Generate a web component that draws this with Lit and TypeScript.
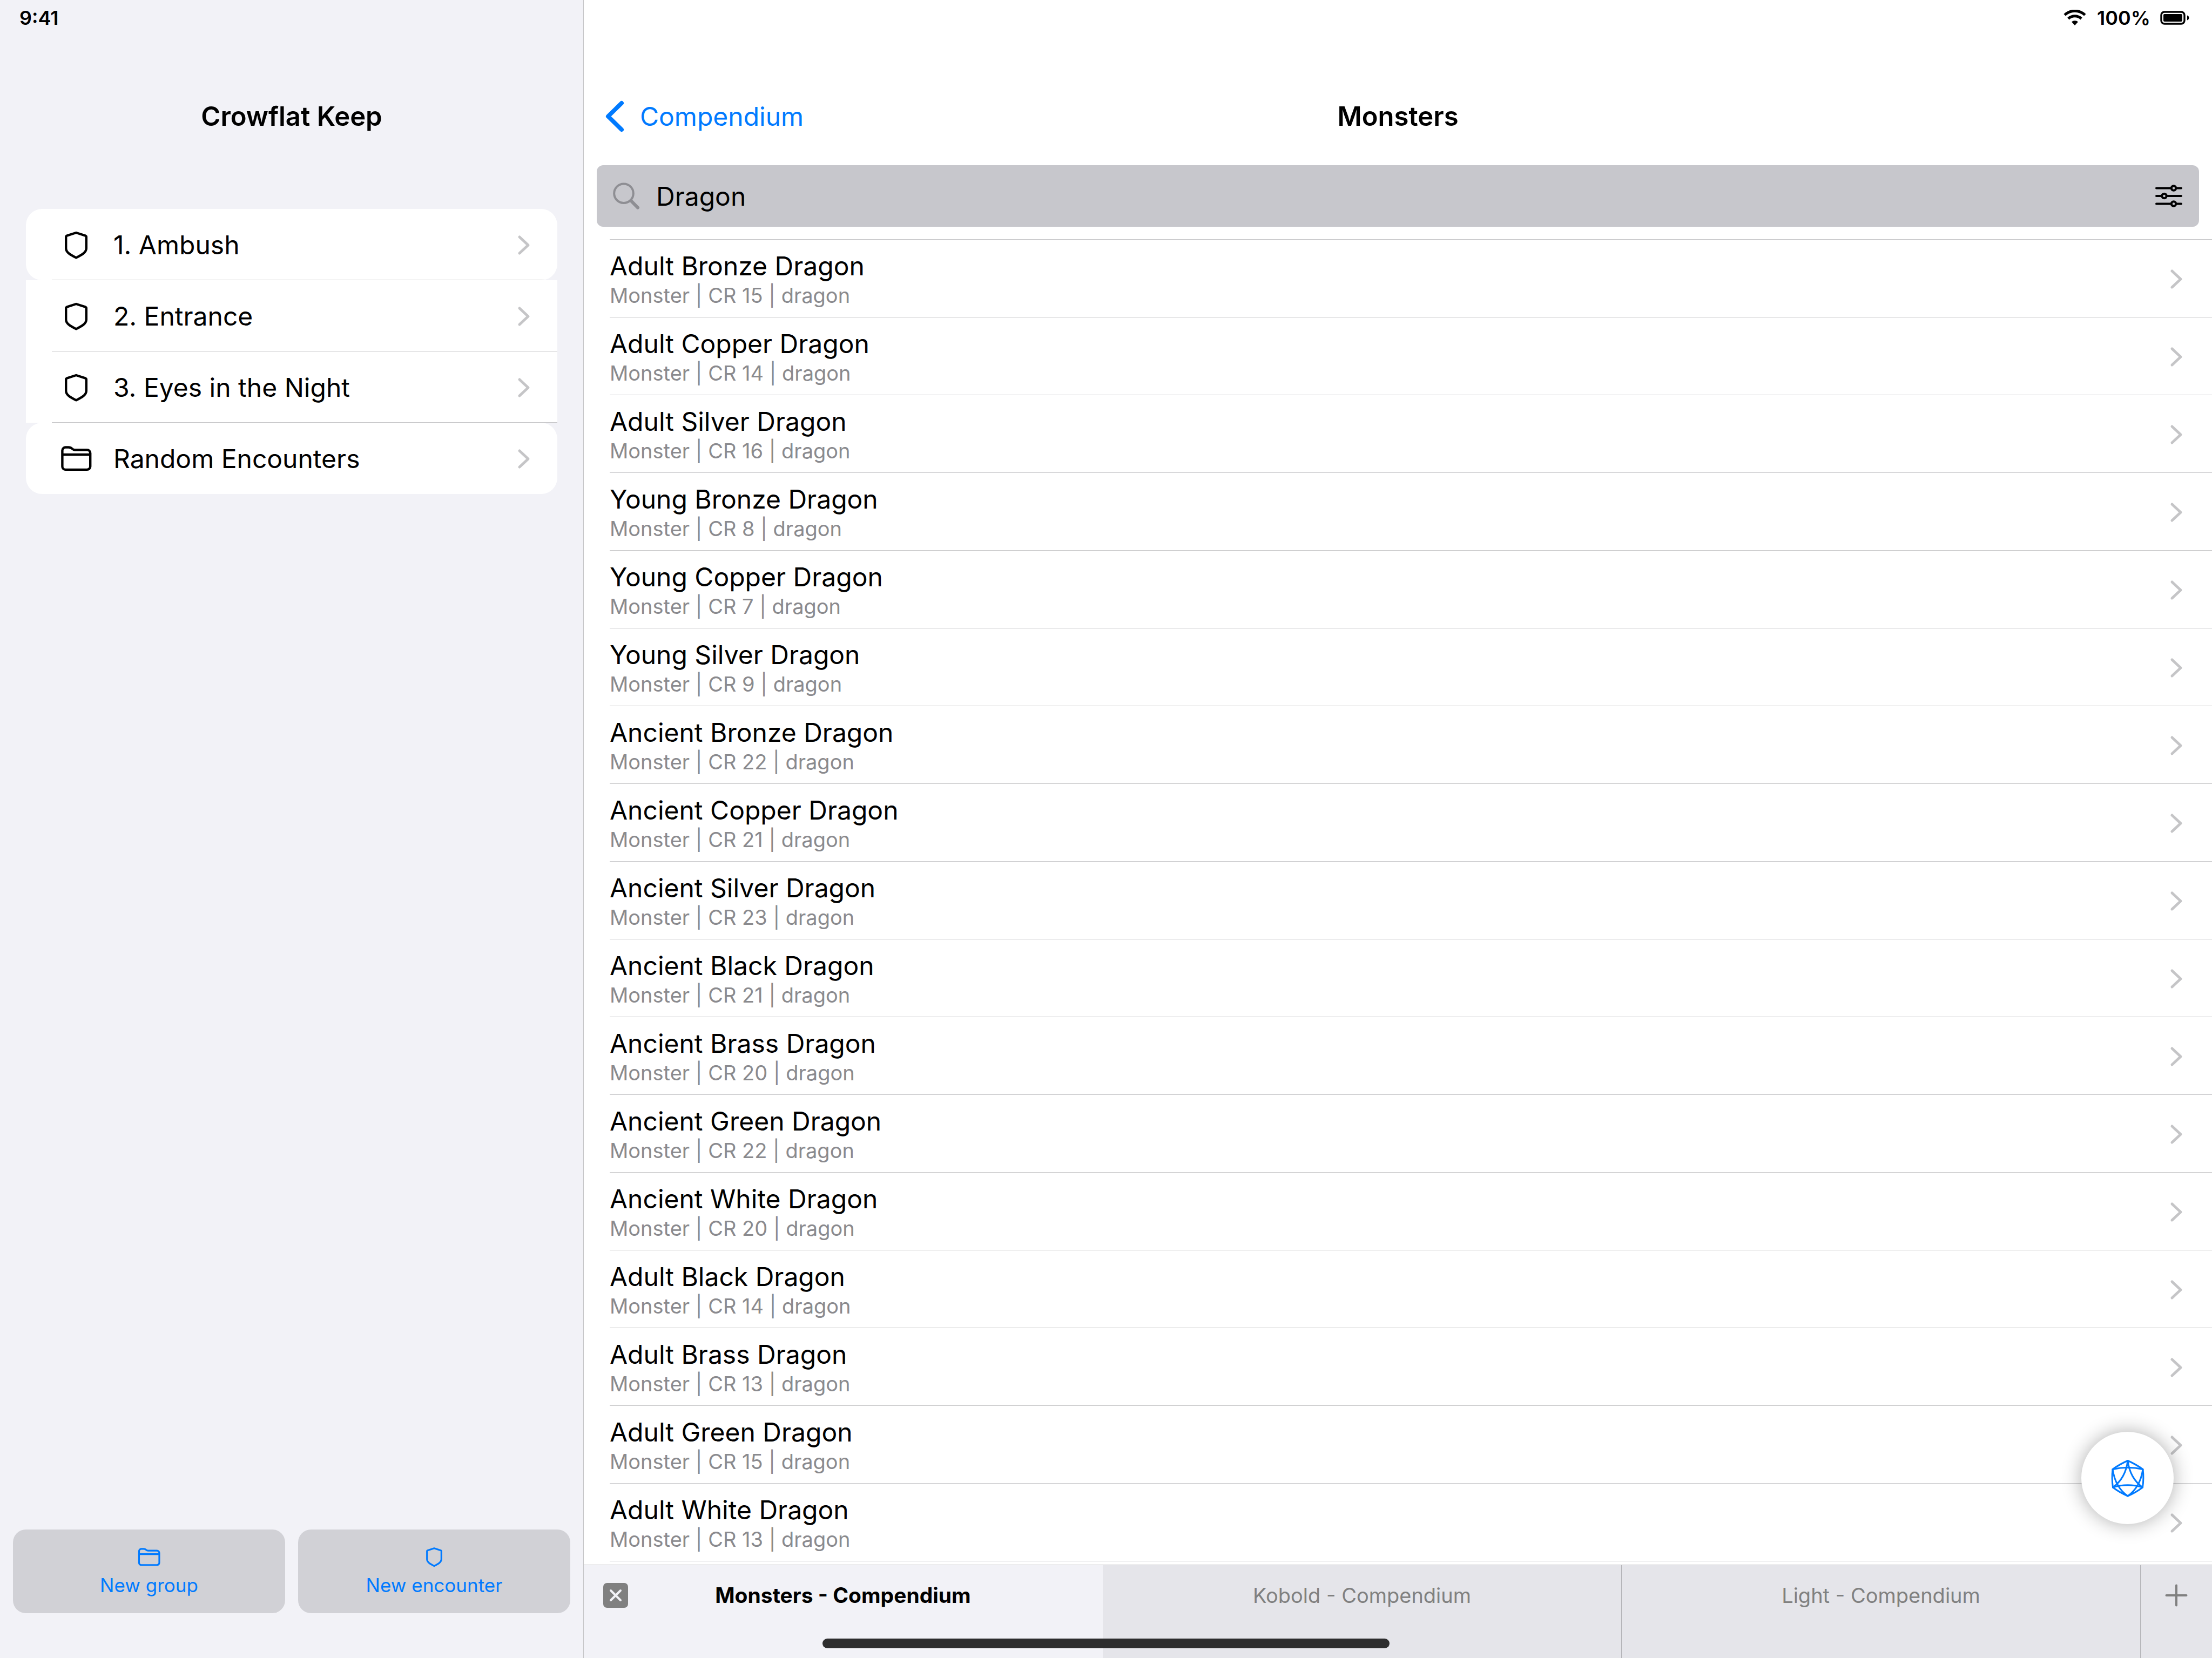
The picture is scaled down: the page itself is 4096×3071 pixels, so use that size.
import { LitElement, html, css, svg } from "lit";
import { customElement, property, state } from "lit/decorators.js";

const shield = svg`<path d="M24 4 L41.4 9.7 Q42.8 10.2 42.8 11.8 V33 C42.8 40.5 34.5 45 24 50.4 C13.5 45 5.2 40.5 5.2 33 V11.8 Q5.2 10.2 6.6 9.7 Z"/>`;
const folder = svg`<path d="M3.4 9.5 a6 6 0 0 1 6 -6 h5.6 c3 0 4.6 .8 6.4 2.5 c1.4 1.3 2.6 2.2 5 2.2 H49.2 a6 6 0 0 1 6 6 V38.9 a6 6 0 0 1 -6 6 H9.4 a6 6 0 0 1 -6 -6 Z M3.4 17 H55.2"/>`;

const ENCOUNTERS = [
  { icon: "shield", label: "1. Ambush" },
  { icon: "shield", label: "2. Entrance" },
  { icon: "shield", label: "3. Eyes in the Night" },
  { icon: "folder", label: "Random Encounters" },
];

const MONSTERS: [string, number][] = [
  ["Adult Bronze Dragon", 15],
  ["Adult Copper Dragon", 14],
  ["Adult Silver Dragon", 16],
  ["Young Bronze Dragon", 8],
  ["Young Copper Dragon", 7],
  ["Young Silver Dragon", 9],
  ["Ancient Bronze Dragon", 22],
  ["Ancient Copper Dragon", 21],
  ["Ancient Silver Dragon", 23],
  ["Ancient Black Dragon", 21],
  ["Ancient Brass Dragon", 20],
  ["Ancient Green Dragon", 22],
  ["Ancient White Dragon", 20],
  ["Adult Black Dragon", 14],
  ["Adult Brass Dragon", 13],
  ["Adult Green Dragon", 15],
  ["Adult White Dragon", 13],
];

const base = css`
  * { box-sizing: border-box; }
  button, input { font: inherit; color: inherit; background: none; border: 0; margin: 0; padding: 0; }
  a { color: inherit; text-decoration: none; }
  ul { list-style: none; margin: 0; padding: 0; }
  h1, p { margin: 0; font-size: inherit; font-weight: inherit; }
  svg { display: block; flex: none; fill: none; stroke: currentColor; stroke-linecap: round; stroke-linejoin: round; }
`;

@customElement("row-chevron")
class RowChevron extends LitElement {
  static styles = [base, css`
    :host { display: block; flex: none; color: #c5c5c7; }
    svg { width: 24px; height: 38px; stroke-width: 5; }
  `];
  render() {
    return html`<svg viewBox="0 0 24 38" aria-hidden="true"><path d="M4 4 L20 19 L4 34"/></svg>`;
  }
}

@customElement("encounter-sidebar")
class EncounterSidebar extends LitElement {
  static styles = [base, css`
    :host { display: flex; flex-direction: column; background: #f2f2f7; border-right: 1px solid #c6c6c8; }
    .clock { height: 66px; line-height: 66px; padding-left: 36px; font-size: 36px; font-weight: 600; }
    .title { height: 300px; line-height: 300px; text-align: center; font-size: 49px; font-weight: 600; }
    .list { margin: 21px 48px 0; }
    .item { background: #fff; }
    .item:first-child, .item:last-child { border-radius: 30px; overflow: hidden; }
    .link { display: flex; align-items: center; height: 132px; margin-left: 48px; padding: 2px 50px 0 0; border-bottom: 1px solid #c6c6c8; }
    .item:last-child .link { border-bottom-color: transparent; }
    .icon { width: 90px; margin-right: 24px; flex: none; display: flex; justify-content: center; }
    .label { flex: 1; font-size: 48px; line-height: 60px; }
    .shield { width: 48px; height: 54px; stroke-width: 4.4; }
    .folder { width: 58px; height: 49px; stroke-width: 4.4; }
    .actions { margin-top: auto; padding: 0 24px 83px; display: flex; gap: 24px; }
    .action { flex: 1; height: 155px; border-radius: 24px; background: #d1d1d6; color: #007aff; font-size: 35px; line-height: 44px;
      display: flex; flex-direction: column; align-items: center; justify-content: center; gap: 10px; }
    .action .shield { width: 34px; height: 40px; }
    .action .folder { width: 42px; height: 40px; }
  `];
  private icon(name: string) {
    return name === "shield"
      ? html`<svg class="shield" viewBox="0 0 48 54" aria-hidden="true">${shield}</svg>`
      : html`<svg class="folder" viewBox="0 0 58 49" aria-hidden="true">${folder}</svg>`;
  }
  render() {
    return html`
      <div class="clock">9:41</div>
      <h1 class="title">Crowflat Keep</h1>
      <ul class="list">
        ${ENCOUNTERS.map((e) => html`<li class="item"><a class="link" href="#">
          <span class="icon">${this.icon(e.icon)}</span><span class="label">${e.label}</span><row-chevron></row-chevron>
        </a></li>`)}
      </ul>
      <div class="actions">
        <button class="action" type="button">${this.icon("folder")}<span>New group</span></button>
        <button class="action" type="button">${this.icon("shield")}<span>New encounter</span></button>
      </div>`;
  }
}

@customElement("monster-row")
class MonsterRow extends LitElement {
  @property() name = "";
  @property({ type: Number }) rating = 0;
  static styles = [base, css`
    :host { display: block; }
    .row { display: flex; align-items: center; height: 144px; padding: 2px 54px 0 0; border-bottom: 1px solid #c6c6c8; }
    .text { flex: 1; }
    .name { font-size: 48px; line-height: 60px; }
    .meta { font-size: 38px; line-height: 48px; color: #8a8a8e; }
  `];
  render() {
    return html`<a class="row" href="#">
      <div class="text"><p class="name">${this.name}</p><p class="meta">Monster | CR ${this.rating} | dragon</p></div>
      <row-chevron></row-chevron>
    </a>`;
  }
}

@customElement("compendium-pane")
class CompendiumPane extends LitElement {
  @state() private query = "Dragon";
  static styles = [base, css`
    :host { display: flex; flex-direction: column; min-width: 0; background: #fff; position: relative; }
    .status { height: 66px; padding-right: 42px; display: flex; align-items: center; justify-content: flex-end; font-size: 36px; font-weight: 600; }
    .wifi { width: 42px; height: 30px; margin-right: 20px; stroke-linecap: butt; stroke-width: 5; }
    .battery { width: 54px; height: 26px; margin-left: 18px; }
    .solid { fill: currentColor; stroke: none; }
    .nav { height: 240px; padding: 60px 36px 0; display: grid; grid-template-columns: 1fr auto 1fr; align-items: start; line-height: 180px; }
    .back { justify-self: start; height: 180px; display: flex; align-items: center; gap: 28px; color: #007aff; font-size: 48px; }
    .back svg { width: 40px; height: 60px; stroke-width: 8; }
    .heading { font-size: 49px; font-weight: 600; }
    .search { height: 114px; margin: 0 24px; padding: 0 30px; border-radius: 12px; background: #c7c7cc; display: flex; align-items: center; font-size: 48px; }
    .glass { width: 50px; height: 50px; color: #8e8e93; stroke-width: 4; margin-right: 30px; }
    .handle { stroke-width: 6; }
    .query { flex: 1; min-width: 0; height: 60px; outline: none; }
    .filter svg { width: 52px; height: 44px; stroke-width: 4; }
    .list { margin-left: 48px; margin-top: 23px; border-top: 1px solid #c6c6c8; }
    .tabs { margin-top: auto; height: 173px; border-top: 1px solid #c6c6c8; display: flex; background: #e5e5ea; color: #808080; }
    .tab { flex: 1; display: flex; align-items: flex-start; border-right: 1px solid #b2b2b6; padding: 33px 36px 0; }
    .tab.active { background: #f2f2f7; color: #000; border-right-color: transparent; }
    .pick { flex: 1; height: 46px; line-height: 46px; font-size: 38px; }
    .active .pick { font-size: 39px; font-weight: 700; padding-right: 46px; }
    .close { width: 46px; height: 46px; border-radius: 7px; background: #808080; color: #f2f2f7; display: grid; place-items: center; }
    .close svg { width: 26px; height: 26px; stroke-width: 4; }
    .add { width: 132px; padding-top: 33px; display: flex; justify-content: center; align-items: flex-start; }
    .add svg { width: 46px; height: 46px; stroke-width: 4; }
    .fab { position: absolute; right: 71px; bottom: 248px; width: 171px; height: 171px; border-radius: 50%; background: #fff; color: #007aff;
      display: grid; place-items: center; box-shadow: 0 0 36px rgba(0, 0, 0, .32); }
    .fab svg { width: 68px; height: 72px; stroke-width: 3; }
  `];
  render() {
    return html`
      <div class="status">
        <svg class="wifi" viewBox="0 0 42 30" aria-hidden="true">
          <path d="M2.2 9.8 A27 27 0 0 1 39.8 9.8"/><path d="M8.9 16.6 A17.5 17.5 0 0 1 33.1 16.6"/>
          <path class="solid" d="M15 22.6 A9 9 0 0 1 27 22.6 L21 29 Z"/>
        </svg>
        <span>100%</span>
        <svg class="battery" viewBox="0 0 54 26" aria-hidden="true">
          <rect x="2" y="2" width="43" height="22" rx="6" stroke-width="3.4"/>
          <rect class="solid" x="6" y="6" width="35" height="14" rx="2"/>
          <path class="solid" d="M50 8.5 C54.5 9.5 54.5 16.5 50 17.5 Z"/>
        </svg>
      </div>
      <nav class="nav">
        <a class="back" href="#"><svg viewBox="0 0 40 60" aria-hidden="true"><path d="M34 5 L9 29.5 L34 54"/></svg>Compendium</a>
        <h1 class="heading">Monsters</h1>
      </nav>
      <div class="search">
        <svg class="glass" viewBox="0 0 50 50" aria-hidden="true"><circle cx="20" cy="20.2" r="17.8"/><path class="handle" d="M34 34.4 L46 46.6"/></svg>
        <input class="query" aria-label="Search monsters" .value=${this.query}
          @input=${(e: Event) => (this.query = (e.target as HTMLInputElement).value)} />
        <button class="filter" type="button" aria-label="Filters">
          <svg viewBox="0 0 52 44" aria-hidden="true">
            <path d="M3 7.5 H30 M40 7.5 H49 M3 22 H12 M22 22 H49 M3 36.5 H30 M40 36.5 H49"/>
            <circle cx="35" cy="7.5" r="4.2"/><circle cx="17.5" cy="22" r="4.2"/><circle cx="35" cy="36.5" r="4.2"/>
          </svg>
        </button>
      </div>
      <ul class="list">
        ${MONSTERS.map(([name, cr]) => html`<li><monster-row .name=${name} .rating=${cr}></monster-row></li>`)}
      </ul>
      <div class="tabs">
        <div class="tab active">
          <button class="close" type="button" aria-label="Close tab"><svg viewBox="0 0 26 26" aria-hidden="true"><path d="M4 4 L22 22 M22 4 L4 22"/></svg></button>
          <button class="pick" type="button">Monsters - Compendium</button>
        </div>
        <div class="tab"><button class="pick" type="button">Kobold - Compendium</button></div>
        <div class="tab"><button class="pick" type="button">Light - Compendium</button></div>
        <button class="add" type="button" aria-label="New tab"><svg viewBox="0 0 46 46" aria-hidden="true"><path d="M4.5 23 H41.5 M23 4.5 V41.5"/></svg></button>
      </div>
      <button class="fab" type="button" aria-label="Roll dice">
        <svg viewBox="0 0 68 72" aria-hidden="true">
          <path d="M34 3.5 Q19 10 6 19.5 Q4 36 6.5 53 Q19 62.5 34 69 Q49 62.5 61.5 53 Q64 36 62 19.5 Q49 10 34 3.5 Z"/>
          <path d="M6 19.5 Q34 13 62 19.5 Q57 53 34 69 Q11 53 6 19.5 Z"/>
          <path d="M34 3.5 Q30 36 6.5 53 Q34 44.5 61.5 53 Q38 36 34 3.5 Z"/>
        </svg>
      </button>`;
  }
}

@customElement("app-root")
class AppRoot extends LitElement {
  static styles = [base, css`
    :host { display: grid; grid-template-columns: 1081px minmax(0, 1fr); min-height: 100vh; position: relative; color: #000;
      font-family: Inter, "Liberation Sans", sans-serif; }
    .home { position: absolute; left: 0; right: 0; bottom: 18px; height: 18px; width: 1050px; margin: 0 auto; border-radius: 9px; background: #2d2d2e; }
  `];
  render() {
    return html`<encounter-sidebar></encounter-sidebar><compendium-pane></compendium-pane><div class="home"></div>`;
  }
}
